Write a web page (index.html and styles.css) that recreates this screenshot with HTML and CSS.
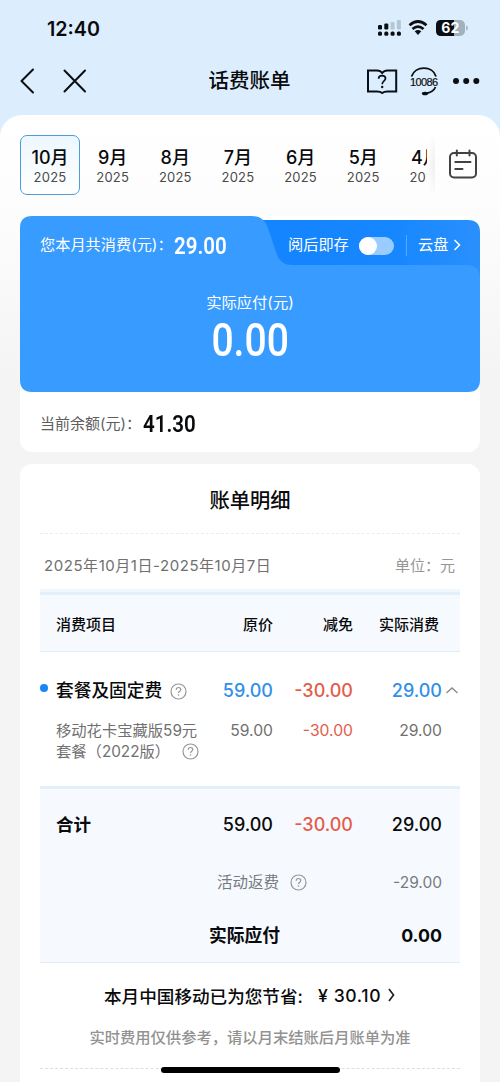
FILE: index.html
```html
<!DOCTYPE html>
<html lang="zh-CN">
<head>
<meta charset="utf-8">
<title>话费账单</title>
<link rel="stylesheet" href="styles.css">
</head>
<body>
<svg class="defs" width="0" height="0"><defs>
  <symbol id="help" viewBox="0 0 17 17"><circle cx="8.5" cy="8.5" r="7.5" fill="none" stroke="currentColor" stroke-width="1.2"/><path d="M6.2 6.8C6.2 3.8 10.8 3.8 10.8 6.6C10.8 8.2 8.5 8.1 8.5 9.9" fill="none" stroke="currentColor" stroke-width="1.2"/><circle cx="8.5" cy="12" r=".8" fill="currentColor"/></symbol>
</defs></svg>
<div class="phone">
  <div class="status">
    <span class="time">12:40</span>
    <svg class="status-icons" width="92" height="20" viewBox="0 0 92 20">
      <g fill="#0b0e12"><rect x="1" y="7" width="4" height="4.5" rx="1.2"/><rect x="7.3" y="5.5" width="4" height="6" rx="1.2"/><rect x="1" y="13.5" width="4" height="4.3" rx="1.5"/><rect x="7.3" y="13.5" width="4" height="4.3" rx="1.5"/><rect x="13.6" y="13.5" width="4" height="4.3" rx="1.5"/><rect x="19.9" y="13.5" width="4" height="4.3" rx="1.5"/></g>
      <g fill="#b4c6d4"><rect x="13.6" y="4" width="4" height="7.5" rx="1.2"/><rect x="19.9" y="2" width="4" height="9.5" rx="1.2"/></g>
      <g fill="none" stroke="#0b0e12" stroke-width="2.7"><path d="M32.5 7.2Q41 -.2 49.500 7.200"/><path d="M35.500 11Q41 6.200 46.500 11"/></g>
      <path d="M37.700 13.200Q41 10.600 44.300 13.200L41 17Z" fill="#0b0e12"/>
      <rect x="59" y="2" width="29" height="16" rx="5" fill="#a2b2bd"/>
      <path d="M64 2H77V18H64Q59 18 59 13V7Q59 2 64 2Z" fill="#0b0e12"/>
      <path d="M89.200 7.500Q91 8 91 10T89.200 12.500Z" fill="#a2b2bd"/>
      <text class="battery" x="73.300" y="15">62</text>
    </svg>
  </div>
  <div class="nav">
    <svg width="70" height="30" viewBox="0 0 70 30" fill="none" stroke="#0b0e12" stroke-width="2" stroke-linecap="round" stroke-linejoin="round"><path d="M13 3.500L1.500 15L13 26.500"/><path d="M44.500 4.500L65 25.500M65 4.500L44.500 25.500"/></svg>
    <h1>话费账单</h1>
    <svg width="116" height="32" viewBox="0 0 116 32" fill="none" stroke="#0b0e12" stroke-width="2">
      <path d="M3 5.500H12Q15.500 5.500 17.200 8Q19 5.500 22.500 5.500H31.200V26.500H22.500Q19 26.500 17.200 28Q15.500 26.500 12 26.500H3Z"/>
      <path stroke-width="1.700" d="M13.600 13.700C13.600 9.500 20.500 9.700 20.500 13.500C20.500 16 17.200 15.800 17.200 19.300"/><circle cx="17.200" cy="22" r="1.200" fill="#0b0e12" stroke="none"/>
      <path d="M46.500 11.500C50 .3 68 .3 71 11.500M70.500 22Q68.500 27 61 28.500" stroke-width="1.800"/><ellipse cx="60" cy="28.500" rx="3.200" ry="1.800" fill="#0b0e12" stroke="none"/>
      <text class="hotline" x="59" y="20.500" textLength="28">10086</text>
      <g fill="#0b0e12" stroke="none"><circle cx="91" cy="16" r="3"/><circle cx="101.200" cy="16" r="3"/><circle cx="111.300" cy="16" r="3"/></g>
    </svg>
  </div>
  <main class="sheet">
    <div class="months">
      <div class="tabs">
        <div class="tab active"><b>10月</b><span>2025</span></div>
        <div class="tab"><b>9月</b><span>2025</span></div>
        <div class="tab"><b>8月</b><span>2025</span></div>
        <div class="tab"><b>7月</b><span>2025</span></div>
        <div class="tab"><b>6月</b><span>2025</span></div>
        <div class="tab"><b>5月</b><span>2025</span></div>
        <div class="tab"><b>4月</b><span>2025</span></div>
      </div>
      <div class="fade"></div>
      <svg class="calendar" width="30" height="30" viewBox="0 0 30 30" fill="none" stroke="#424244" stroke-width="2" stroke-linecap="round"><rect x="2" y="4" width="26" height="24.500" rx="4"/><path d="M8.800 1.500V6.500M21.500 1.500V6.500M7.300 13H22.500M7.300 20H14.500"/></svg>
    </div>
    <section class="summary">
      <div class="folder">
        <svg class="folder-shape" width="460" height="176" viewBox="0 0 460 176">
          <defs><linearGradient id="tabBlue"><stop offset="0" stop-color="#1484ff"/><stop offset=".65" stop-color="#1787ff"/><stop offset="1" stop-color="#2a90fc"/></linearGradient></defs>
          <path d="M220 4H448Q460 4 460 16V80H220Z" fill="url(#tabBlue)"/>
          <path d="M12 0H232Q244 0 248 12L257 39Q261 49 272 49H446Q460 49 460 62V164Q460 176 448 176H12Q0 176 0 164V12Q0 0 12 0Z" fill="#389bff"/>
        </svg>
        <div class="folder-head">
          <span class="lead">您本月共消费(元)：</span><span class="num spent">29.00</span>
          <span class="keep">阅后即存</span><i class="switch"></i><i class="divider"></i>
          <span class="cloud">云盘</span>
          <svg width="8" height="12" viewBox="0 0 8 12" fill="none" stroke="#fff" stroke-width="1.500"><path d="M1.500 1L6.500 6L1.500 11"/></svg>
        </div>
        <div class="due-label">实际应付(元)</div>
        <div class="due"><span class="num">0.00</span></div>
      </div>
      <div class="balance"><span>当前余额(元)：</span><span class="num">41.30</span></div>
    </section>
    <section class="detail">
      <h2>账单明细</h2>
      <div class="period"><span class="range">2025年10月1日-2025年10月7日</span><span class="unit">单位：元</span></div>
      <div class="row head"><span>消费项目</span><span>原价</span><span>减免</span><span>实际消费</span></div>
      <div class="items">
        <div class="row group"><i class="dot"></i><span>套餐及固定费<svg class="help"><use href="#help"/></svg></span><span>59.00</span><span class="red">-30.00</span><span>29.00</span>
          <svg class="up" width="12" height="7" viewBox="0 0 12 7" fill="none" stroke="#888" stroke-width="1.300"><path d="M.5 6L6 1L11.500 6"/></svg></div>
        <div class="row item"><span>移动花卡宝藏版59元<br>套餐（2022版）<svg class="help"><use href="#help"/></svg></span><span>59.00</span><span class="red">-30.00</span><span>29.00</span></div>
      </div>
      <div class="totals">
        <div class="row total"><span>合计</span><span>59.00</span><span class="red">-30.00</span><span>29.00</span></div>
        <div class="line rebate"><span>活动返费<svg class="help"><use href="#help"/></svg></span><span>-29.00</span></div>
        <div class="line pay"><span>实际应付</span><span>0.00</span></div>
      </div>
      <div class="saved"><span>本月中国移动已为您节省:</span><span class="amount">¥ 30.10</span><svg width="8" height="14" viewBox="0 0 8 14" fill="none" stroke="#222" stroke-width="1.700"><path d="M1 1L5.500 7L1 13"/></svg></div>
      <p class="note">实时费用仅供参考，请以月末结账后月账单为准</p>
      <div class="end"></div>
    </section>
  </main>
  <div class="home"></div>
</div>
</body>
</html>
```
FILE: styles.css
```css
* { box-sizing: border-box; }
body { margin: 0; font-family: Inter, "Noto Sans CJK SC", sans-serif; color: #090a0c; }
h1, h2, p { margin: 0; font-weight: 500; }
.defs { position: absolute; }
.phone { position: relative; width: 500px; height: 1082px; overflow: hidden; background: #dceefe; display: flex; flex-direction: column; }
.status { height: 56px; flex: none; display: flex; justify-content: space-between; padding: 18px 31px 0 47px; }
.time { font-size: 19.700px; line-height: 22px; font-weight: 600; }
.battery { font: 700 14px Inter, sans-serif; fill: #fff; text-anchor: middle; }
.nav { height: 59px; flex: none; display: grid; grid-template-columns: 1fr auto 1fr; align-items: center; padding: 0 19px 10px 20px; }
.nav > svg:last-child { justify-self: end; }
.nav h1 { font-size: 20.5px; line-height: 30px; margin-left: -2px; }
.hotline { font: 400 11px "Liberation Sans", sans-serif; fill: #0b0e12; stroke: #0b0e12; stroke-width: .2; text-anchor: middle; }

.sheet { flex: none; height: 967px; border-radius: 22px 22px 0 0; background: linear-gradient(#fff 0, #fdfdfd 90px, #f4f4f4 270px); padding: 20px 20px 0; }
.months { display: flex; height: 60px; }
.tabs { width: 407px; display: flex; gap: 2.650px; overflow: hidden; }
.tab { flex: none; width: 60px; height: 60px; padding-top: 11px; display: flex; flex-direction: column; align-items: center; border: 1px solid transparent; border-radius: 7px; }
.tab b { font-size: 18px; line-height: 22px; font-weight: 500; }
.tab span { font-size: 13px; line-height: 17px; color: #4b4b4b; letter-spacing: .2px; }
.tab.active { border-color: #4b9eda; background: linear-gradient(#edf7ff, #fff); }
.fade { width: 8px; margin: -2px 0; background: linear-gradient(90deg, #fff0, #e8e8e8c0); -webkit-mask-image: linear-gradient(transparent, #000, transparent); mask-image: linear-gradient(transparent, #000, transparent); }
.calendar { margin: 14px 0 0 13px; }

.summary { margin-top: 21px; height: 236px; background: #fff; border-radius: 12px; }
.folder { height: 176px; position: relative; color: #fff; }
.folder-shape { position: absolute; inset: 0; }
.folder-head { position: relative; height: 58px; padding-left: 20px; display: flex; align-items: center; font-size: 15.200px; line-height: 20px; }
.folder-head > * { flex: none; }
.lead { width: 134px; white-space: nowrap; }
.num { display: inline-block; font-family: Roboto, sans-serif; font-weight: 600; font-size: 24.500px; line-height: 28px; transform: scaleX(.84); transform-origin: left center; }
.spent { width: 114px; padding-top: 2px; }
.keep { width: 71px; }
.switch { width: 35px; height: 18px; margin-top: 1px; border-radius: 9px; background: #9bccff; }
.switch::before { content: ""; display: block; width: 18px; height: 18px; border-radius: 50%; background: #fff; }
.divider { width: 1px; height: 21px; margin: 0 11px 0 12px; background: #59aaff; }
.cloud { width: 35px; }
.due-label { position: relative; margin-top: 18px; text-align: center; font-size: 15.300px; line-height: 22px; }
.due { position: relative; display: flex; justify-content: center; margin-top: -1px; }
.due .num { font-size: 46.500px; line-height: 54px; font-weight: 500; transform-origin: center; }
.balance { height: 60px; padding-left: 20px; display: flex; align-items: center; font-size: 15px; color: #5e5e5e; }
.balance > span:first-child { width: 103px; white-space: nowrap; }
.balance .num { color: #090a0c; padding-top: 3px; }

.detail { margin-top: 12px; height: 640px; padding: 0 20px; background: #fff; border-radius: 12px 12px 0 0; }
.detail h2 { height: 70px; padding-top: 22px; font-size: 20.300px; line-height: 30px; text-align: center; border-bottom: 1px dashed #ededed; }
.period { height: 55px; padding: 5px 5px 0 4px; display: flex; justify-content: space-between; align-items: center; font-size: 15px; color: #707070; white-space: nowrap; }
.range { letter-spacing: .55px; }
.unit { color: #969696; }
.row { display: grid; grid-template-columns: 146px 71px 80px 89px; padding-left: 16px; position: relative; }
.row > span:not(:first-of-type) { text-align: right; }
.head { height: 63px; padding-top: 3px; align-items: center; font-size: 15px; font-weight: 500; background: #f6faff; border-top: 3px solid #f0f7fd; border-bottom: 1px solid #dfedf7; box-shadow: inset 0 3px #e1f0fa; }
.head > span:last-child { position: relative; left: -3px; }
.items { height: 134px; padding-top: 26px; }
.group { font-size: 18px; line-height: 26px; color: #3290e8; font-weight: 500; }
.group > span:first-of-type { font-size: 17.700px; color: #090a0c; white-space: nowrap; }
.dot { position: absolute; left: 0; top: 6px; width: 8px; height: 8px; border-radius: 50%; background: #1686f8; }
.red, .group .red { color: #e35d4c; }
.up { position: absolute; right: 2px; top: 9px; }
.help { width: 17px; height: 17px; color: #969696; vertical-align: -3px; }
.group .help { margin-left: 8px; }
.item { margin-top: 16px; font-size: 15.300px; line-height: 21px; color: #707070; }
.item > span:first-child { white-space: nowrap; }
.item > span:not(:first-child) { font-size: 15.700px; }
.item .help { margin-left: 12px; }
.totals { height: 177px; background: #f6faff; border-top: 3px solid #e1f0fa; border-bottom: 1px solid #dfedf7; }
.total { padding-top: 23px; font-size: 18px; line-height: 26px; font-weight: 500; }
.total > span:first-child { font-size: 17.500px; font-weight: 700; }
.line { display: flex; justify-content: space-between; padding-right: 18px; line-height: 26px; }
.rebate { margin-top: 32px; padding-left: 177px; font-size: 15.500px; color: #777b80; }
.rebate .help { margin-left: 11px; }
.pay { margin-top: 27px; padding-left: 169px; font-size: 17.800px; font-weight: 700; }
.saved { margin-top: 18px; height: 28px; padding-left: 64px; display: flex; align-items: center; font-size: 17.600px; font-weight: 500; white-space: nowrap; }
.amount { margin-left: 15px; letter-spacing: .65px; }
.saved svg { margin-left: 7px; }
.note { margin-top: 18px; text-align: center; font-size: 15.300px; line-height: 22px; color: #929292; }
.end { margin-top: 19px; border-top: 1px dashed #dedede; }
.home { position: absolute; left: 161px; top: 1067px; width: 179px; height: 6px; border-radius: 3px; background: #000; }
```
